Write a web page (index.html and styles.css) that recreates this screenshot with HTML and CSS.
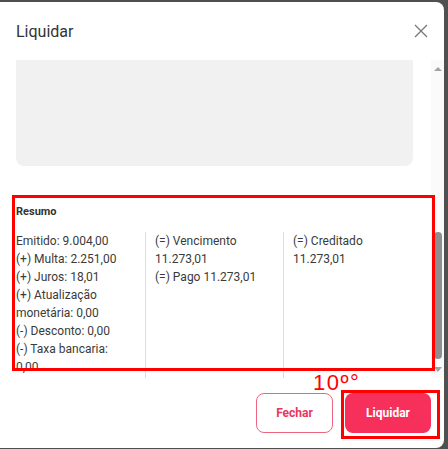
FILE: index.html
```html
<!DOCTYPE html>
<html lang="pt">
<head>
  <meta charset="UTF-8">
  <title>Liquidar</title>
  <link rel="stylesheet" href="styles.css">
</head>
<body>
  <div class="modal">
    <div class="modal-header">
      <h2 class="modal-title">Liquidar</h2>
      <button class="close-button" aria-label="Fechar">
        <svg width="14" height="14" viewBox="0 0 14 14"><path d="M1 1L13 13M13 1L1 13" stroke="#777" stroke-width="1.3" fill="none"/></svg>
      </button>
    </div>

    <div class="modal-body">
      <div class="scroll-content">
        <div class="obs-box"></div>

        <div class="resumo">
          <h3 class="resumo-title">Resumo</h3>
          <div class="resumo-cols">
            <div class="resumo-col">
              <div>Emitido: 9.004,00</div>
              <div>(+) Multa: 2.251,00</div>
              <div>(+) Juros: 18,01</div>
              <div>(+) Atualização monetária: 0,00</div>
              <div>(-) Desconto: 0,00</div>
              <div>(-) Taxa bancaria: 0,00</div>
            </div>
            <div class="resumo-col">
              <div>(=) Vencimento 11.273,01</div>
              <div>(=) Pago 11.273,01</div>
            </div>
            <div class="resumo-col">
              <div>(=) Creditado 11.273,01</div>
            </div>
          </div>
        </div>
      </div>

      <div class="scrollbar">
        <span class="arrow-up"></span>
        <span class="thumb"></span>
        <span class="arrow-down"></span>
      </div>
    </div>

    <div class="modal-footer">
      <button class="btn btn-outline">Fechar</button>
      <button class="btn btn-primary">Liquidar</button>
    </div>

    <!-- marcações -->
    <div class="mark mark-resumo"></div>
    <div class="mark mark-button"></div>
    <div class="mark-label">10º°</div>
  </div>
</body>
</html>
```

FILE: styles.css
```css
body {
  margin: 0;
  background-color: #505050;
  font-family: "Roboto", "Liberation Sans", sans-serif;
  color: #3a3a3a;
}

.modal {
  position: relative;
  width: 444px;
  height: 446px;
  margin-top: 2px;
  background-color: #fff;
  border-radius: 0 8px 8px 0;
  display: flex;
  flex-direction: column;
  overflow: hidden;
}

.modal-header {
  height: 58px;
  flex-shrink: 0;
  display: flex;
  align-items: center;
  justify-content: space-between;
  padding: 0 16px;
}

.modal-title {
  margin: 0;
  font-size: 16px;
  font-weight: 400;
  color: #333;
}

.close-button {
  border: none;
  background: transparent;
  padding: 0;
  display: flex;
  cursor: pointer;
}

/* Body with fake scrollbar */
.modal-body {
  height: 318px;
  flex-shrink: 0;
  display: flex;
}

.scroll-content {
  flex: 1;
  overflow: hidden;
  padding: 0 18px 0 16px;
}

.obs-box {
  height: 106px;
  background-color: #f1f1f1;
  border-radius: 0 0 8px 8px;
}

.resumo {
  margin-top: 37px;
}

.resumo-title {
  margin: 0 0 11px;
  font-size: 11px;
  font-weight: 700;
  line-height: 18px;
  color: #333;
}

.resumo-cols {
  display: flex;
  font-size: 12px;
  line-height: 18px;
}

.resumo-col {
  padding: 0 10px 0 9px;
  height: 160px;
}

.resumo-col:first-child {
  width: 112px;
  padding: 0 17px 0 0;
}

.resumo-col:nth-child(2) {
  width: 118px;
  border-left: 1px solid #ddd;
}

.resumo-col:last-child {
  flex: 1;
  border-left: 1px solid #ddd;
}

.scrollbar {
  width: 13px;
  background-color: #fafafa;
  display: flex;
  flex-direction: column;
  align-items: center;
  padding: 7px 0 6px;
  box-sizing: border-box;
}

.arrow-up,
.arrow-down {
  width: 0;
  height: 0;
  border-left: 4px solid transparent;
  border-right: 4px solid transparent;
}

.arrow-up {
  border-bottom: 4px solid #a3a3a3;
}

.arrow-down {
  border-top: 5px solid #a3a3a3;
  margin-top: auto;
}

.thumb {
  width: 8px;
  height: 127px;
  margin-top: 161px;
  background-color: #8e8e8e;
  border-radius: 4px;
}

/* Footer */
.modal-footer {
  flex: 1;
  display: flex;
  justify-content: flex-end;
  align-items: flex-start;
  gap: 12px;
  padding: 15px 13px 0 0;
}

.btn {
  height: 40px;
  border-radius: 8px;
  font-family: inherit;
  font-size: 12px;
  font-weight: 700;
  cursor: pointer;
}

.btn-outline {
  width: 77px;
  background-color: #fff;
  border: 1px solid #f0647f;
  color: #e8365d;
}

.btn-primary {
  width: 86px;
  background-color: #f6305a;
  border: none;
  color: #fff;
}

/* Red annotations */
.mark {
  position: absolute;
  border: 3px solid #ff0000;
  box-sizing: border-box;
}

.mark-resumo {
  left: 12px;
  top: 193px;
  width: 423px;
  height: 176px;
}

.mark-button {
  left: 341px;
  top: 388px;
  width: 99px;
  height: 49px;
}

.mark-label {
  position: absolute;
  left: 313px;
  top: 370px;
  font-family: "Liberation Sans", sans-serif;
  font-size: 22px;
  line-height: 22px;
  letter-spacing: 1.5px;
  color: #ff0000;
}
```
